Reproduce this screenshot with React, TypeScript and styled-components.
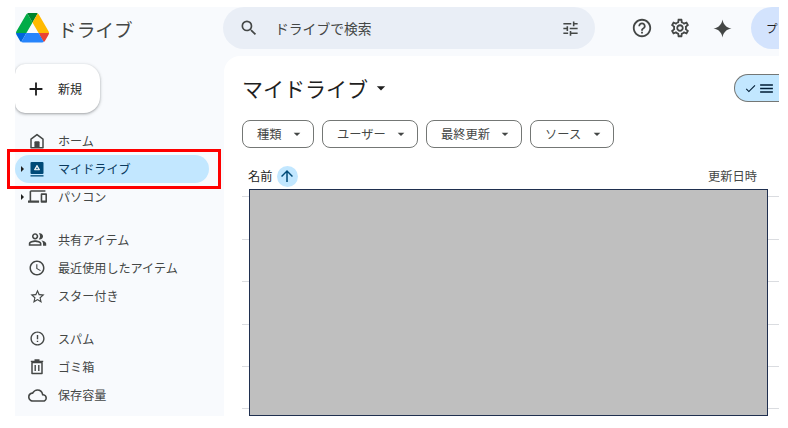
import React from "react";
import styled, { createGlobalStyle } from "styled-components";
import {
  MdAccessTime,
  MdAdd,
  MdArrowDropDown,
  MdArrowUpward,
  MdCheck,
  MdErrorOutline,
  MdMenu,
  MdOutlineCloud,
  MdOutlineDevices,
  MdOutlineHelpOutline,
  MdOutlinePeopleAlt,
  MdOutlineSettings,
  MdSearch,
  MdStarBorder,
  MdTune,
} from "react-icons/md";

const GlobalStyle = createGlobalStyle`
    html, body {
        margin: 0;
        background-color: white;
    }

    body {
        font-family: "Noto Sans CJK JP", "Noto Sans", sans-serif;
    }
`;

const Page = styled.div`
    position: relative;
    width: 788px;
    height: 428px;
    padding: 7px 0 0 15px;
    box-sizing: border-box;
    overflow: hidden;
`;

const Frame = styled.div`
    display: flex;
    flex-direction: column;
    width: 764px;
    height: 409px;
    background-color: #f8fafd;
    overflow: hidden;
`;

const Header = styled.header`
    display: flex;
    align-items: center;
    height: 49px;
    padding-bottom: 7px;
    box-sizing: border-box;
    flex-shrink: 0;
`;

const Brand = styled.div`
    display: flex;
    align-items: center;
    gap: 9px;
    width: 208px;
    padding-left: 1px;
    box-sizing: border-box;
    color: #444746;
    font-size: 18.7px;
`;

const SearchBar = styled.div`
    display: flex;
    align-items: center;
    width: 372px;
    height: 42px;
    padding: 0 15px 0 16px;
    box-sizing: border-box;
    border-radius: 21px;
    background-color: #e9eef6;
    color: #444746;
    font-size: 13.8px;

    span {
        flex: 1;
        margin-left: 16px;
    }
`;

const HeaderIcon = styled.div<{ $left: number }>`
    display: flex;
    margin-left: ${(props) => props.$left}px;
    color: #444746;
`;

const AccountPill = styled.div`
    display: flex;
    align-items: center;
    margin-left: auto;
    width: 28px;
    height: 42px;
    padding-left: 15px;
    box-sizing: border-box;
    border-radius: 21px 0 0 21px;
    background-color: #d3e3fd;
    color: #1f1f1f;
    font-size: 11.5px;
`;

const Body = styled.div`
    display: flex;
    flex: 1;
    min-height: 0;
`;

const Sidebar = styled.nav`
    display: flex;
    flex-direction: column;
    gap: 14.5px;
    width: 209px;
    padding-right: 15px;
    box-sizing: border-box;
    flex-shrink: 0;
`;

const NewButton = styled.button`
    display: flex;
    align-items: center;
    gap: 11px;
    width: 85px;
    height: 49px;
    margin: 8px 0 -1px;
    padding: 0 0 0 10px;
    border: none;
    border-radius: 10px 16px 16px 10px;
    background-color: white;
    box-shadow: 0 1px 2px rgba(60, 64, 67, 0.3), 0 1px 3px 1px rgba(60, 64, 67, 0.15);
    color: #1f1f1f;
    font-family: inherit;
    font-size: 12px;
`;

const NavGroup = styled.div`
    display: flex;
    flex-direction: column;
`;

const NavRow = styled.div<{ $active?: boolean }>`
    display: flex;
    align-items: center;
    height: 28.2px;
    padding-left: 3px;
    border-radius: 15px;
    background-color: ${(props) => (props.$active ? "#c2e7ff" : "transparent")};
    color: ${(props) => (props.$active ? "#0b3a5e" : "#444746")};
    font-size: 12.1px;
    line-height: 1;
`;

const CaretSlot = styled.div`
    width: 8px;
    display: flex;
    justify-content: center;
`;

const Caret = styled.div`
    width: 0;
    height: 0;
    border-top: 3px solid transparent;
    border-bottom: 3px solid transparent;
    border-left: 3px solid #1f1f1f;
`;

const NavIcon = styled.div`
    display: flex;
    justify-content: center;
    width: 22px;
    margin-right: 10px;
`;

const Main = styled.main`
    display: flex;
    flex-direction: column;
    flex: 1;
    min-width: 0;
    border-radius: 16px 0 0 0;
    background-color: white;
`;

const TitleRow = styled.div`
    display: flex;
    align-items: center;
    justify-content: space-between;
    height: 28px;
    margin-top: 18px;
    padding-left: 18px;
`;

const Title = styled.h1`
    display: flex;
    align-items: center;
    gap: 3px;
    margin: 0;
    color: #1f1f1f;
    font-size: 21px;
    font-weight: 400;
`;

const ViewToggle = styled.div`
    display: flex;
    align-items: center;
    gap: 1px;
    width: 45px;
    height: 28px;
    padding-left: 9px;
    box-sizing: border-box;
    border: 1px solid #747775;
    border-right: none;
    border-radius: 14px 0 0 14px;
    background-color: #c2e7ff;
    color: #001d35;
`;

const Filters = styled.div`
    display: flex;
    gap: 8px;
    margin-top: 18px;
    padding-left: 18px;
`;

const Chip = styled.div<{ $width: number }>`
    display: flex;
    align-items: center;
    justify-content: space-between;
    width: ${(props) => props.$width}px;
    height: 28px;
    padding: 0 8px 0 14px;
    box-sizing: border-box;
    border: 1px solid #747775;
    border-radius: 8px;
    color: #444746;
    font-size: 12.25px;
`;

const Table = styled.div`
    position: relative;
    flex: 1;
    margin-top: 16px;
    padding-left: 18px;
`;

const TableHead = styled.div`
    display: flex;
    align-items: center;
    justify-content: space-between;
    height: 24px;
    padding: 0 22px 0 6px;
    color: #444746;
    font-size: 12.25px;
`;

const NameHead = styled.div`
    display: flex;
    align-items: center;
    gap: 4px;
    color: #1f1f1f;
`;

const SortBadge = styled.div`
    display: flex;
    align-items: center;
    justify-content: center;
    width: 21px;
    height: 21px;
    border-radius: 50%;
    background-color: #c2e7ff;
    color: #004a77;
`;

const Row = styled.div`
    height: 42.4px;
    box-sizing: border-box;
    border-bottom: 1px solid #dadce0;

    &:first-child {
        height: 9.4px;
    }
`;

const Redaction = styled.div`
    position: absolute;
    top: 25px;
    left: 25px;
    right: 11px;
    bottom: 0;
    box-sizing: border-box;
    border: 1px solid #1f2f4f;
    background-color: #bfbfbf;
`;

const Highlight = styled.div`
    position: absolute;
    top: 149px;
    left: 7px;
    width: 214px;
    height: 40px;
    box-sizing: border-box;
    border: 3px solid #fe0000;
`;

function DriveLogo() {
  return (
    <svg width="33" height="29.5" viewBox="0 0 87.3 78">
      <path d="m6.6 66.85 3.85 6.65c.8 1.4 1.95 2.5 3.3 3.3l13.75-23.8h-27.5c0 1.55.4 3.1 1.2 4.5z" fill="#0066da" />
      <path d="m43.65 25-13.75-23.8c-1.35.8-2.5 1.9-3.3 3.3l-25.4 44a9.06 9.06 0 0 0 -1.2 4.5h27.5z" fill="#00ac47" />
      <path d="m73.55 76.8c1.35-.8 2.5-1.9 3.3-3.3l1.6-2.75 7.65-13.25c.8-1.4 1.2-2.95 1.2-4.5h-27.502l5.852 11.5z" fill="#ea4335" />
      <path d="m43.65 25 13.75-23.8c-1.35-.8-2.9-1.2-4.5-1.2h-18.5c-1.6 0-3.15.45-4.5 1.2z" fill="#00832d" />
      <path d="m59.8 53h-32.3l-13.75 23.8c1.35.8 2.9 1.2 4.5 1.2h50.8c1.6 0 3.15-.45 4.5-1.2z" fill="#2684fc" />
      <path d="m73.4 26.5-12.7-22c-.8-1.4-1.95-2.5-3.3-3.3l-13.75 23.8 16.15 28h27.45c0-1.55-.4-3.1-1.2-4.5z" fill="#ffba00" />
    </svg>
  );
}

function SparkIcon() {
  return (
    <svg width="19" height="19" viewBox="0 0 20 20">
      <path d="M10 0.5C10.8 5.8 14.2 9.2 19.5 10C14.2 10.8 10.8 14.2 10 19.5C9.2 14.2 5.8 10.8 0.5 10C5.8 9.2 9.2 5.8 10 0.5Z" fill="#444746" />
    </svg>
  );
}

function MyDriveIcon() {
  return (
    <svg width="18" height="18" viewBox="0 0 18 18">
      <path d="M3.5 2H14.5A1 1 0 0 1 15.5 3V13A1 1 0 0 1 14.5 14H3.5A1 1 0 0 1 2.5 13V3A1 1 0 0 1 3.5 2Z" fill="#004a77" />
      <rect x="2.5" y="15.2" width="13" height="1.3" fill="#004a77" />
      <path d="M9 5.3L11.6 9.8H6.4Z" fill="white" stroke="white" strokeWidth="0.8" strokeLinejoin="round" />
      <circle cx="9" cy="8.4" r="0.8" fill="#004a77" />
    </svg>
  );
}

function HomeIcon() {
  return (
    <svg width="18" height="18" viewBox="0 0 18 18">
      <path d="M3 15.8V7.2L9 2.6L15 7.2V15.8Z" fill="none" stroke="#444746" strokeWidth="1.5" strokeLinejoin="round" />
      <path d="M6.4 15.8V10.2C6.4 9.7 6.8 9.3 7.3 9.3H10.7C11.2 9.3 11.6 9.7 11.6 10.2V15.8Z" fill="#444746" />
    </svg>
  );
}

function TrashIcon() {
  return (
    <svg width="18" height="18" viewBox="0 0 18 18">
      <path d="M4 4.5H14V15.5H4Z" fill="none" stroke="#444746" strokeWidth="1.5" strokeLinejoin="round" />
      <path d="M2.8 3.4H15.2M6.5 2H11.5" stroke="#444746" strokeWidth="1.4" />
      <path d="M7.2 7V13M10.8 7V13" stroke="#444746" strokeWidth="1.4" />
    </svg>
  );
}

const navGroups = [
  [
    { label: "ホーム", icon: <HomeIcon /> },
    { label: "マイドライブ", icon: <MyDriveIcon />, active: true, caret: true },
    { label: "パソコン", icon: <MdOutlineDevices size={19} />, caret: true },
  ],
  [
    { label: "共有アイテム", icon: <MdOutlinePeopleAlt size={19} /> },
    { label: "最近使用したアイテム", icon: <MdAccessTime size={18} /> },
    { label: "スター付き", icon: <MdStarBorder size={17} /> },
  ],
  [
    { label: "スパム", icon: <MdErrorOutline size={17} /> },
    { label: "ゴミ箱", icon: <TrashIcon /> },
    { label: "保存容量", icon: <MdOutlineCloud size={19} /> },
  ],
];

const filters = [
  { label: "種類", width: 72 },
  { label: "ユーザー", width: 96 },
  { label: "最終更新", width: 96 },
  { label: "ソース", width: 84 },
];

export default function App() {
  return (
    <Page>
      <GlobalStyle />
      <Frame>
        <Header>
          <Brand>
            <DriveLogo />
            ドライブ
          </Brand>
          <SearchBar>
            <MdSearch size={20} />
            <span>ドライブで検索</span>
            <MdTune size={19} />
          </SearchBar>
          <HeaderIcon $left={36}>
            <MdOutlineHelpOutline size={22} />
          </HeaderIcon>
          <HeaderIcon $left={16}>
            <MdOutlineSettings size={22} />
          </HeaderIcon>
          <HeaderIcon $left={22}>
            <SparkIcon />
          </HeaderIcon>
          <AccountPill>プ</AccountPill>
        </Header>
        <Body>
          <Sidebar>
            <NewButton>
              <MdAdd size={22} />
              新規
            </NewButton>
            {navGroups.map((group, index) => (
              <NavGroup key={index}>
                {group.map((item) => (
                  <NavRow key={item.label} $active={item.active}>
                    <CaretSlot>{item.caret && <Caret />}</CaretSlot>
                    <NavIcon>{item.icon}</NavIcon>
                    {item.label}
                  </NavRow>
                ))}
              </NavGroup>
            ))}
          </Sidebar>
          <Main>
            <TitleRow>
              <Title>
                マイドライブ
                <MdArrowDropDown size={20} />
              </Title>
              <ViewToggle>
                <MdCheck size={13} />
                <MdMenu size={17} />
              </ViewToggle>
            </TitleRow>
            <Filters>
              {filters.map((filter) => (
                <Chip key={filter.label} $width={filter.width}>
                  {filter.label}
                  <MdArrowDropDown size={16} />
                </Chip>
              ))}
            </Filters>
            <Table>
              <TableHead>
                <NameHead>
                  名前
                  <SortBadge>
                    <MdArrowUpward size={18} />
                  </SortBadge>
                </NameHead>
                更新日時
              </TableHead>
              <div>
                {[0, 1, 2, 3, 4, 5].map((row) => (
                  <Row key={row} />
                ))}
              </div>
              <Redaction />
            </Table>
          </Main>
        </Body>
      </Frame>
      <Highlight />
    </Page>
  );
}
